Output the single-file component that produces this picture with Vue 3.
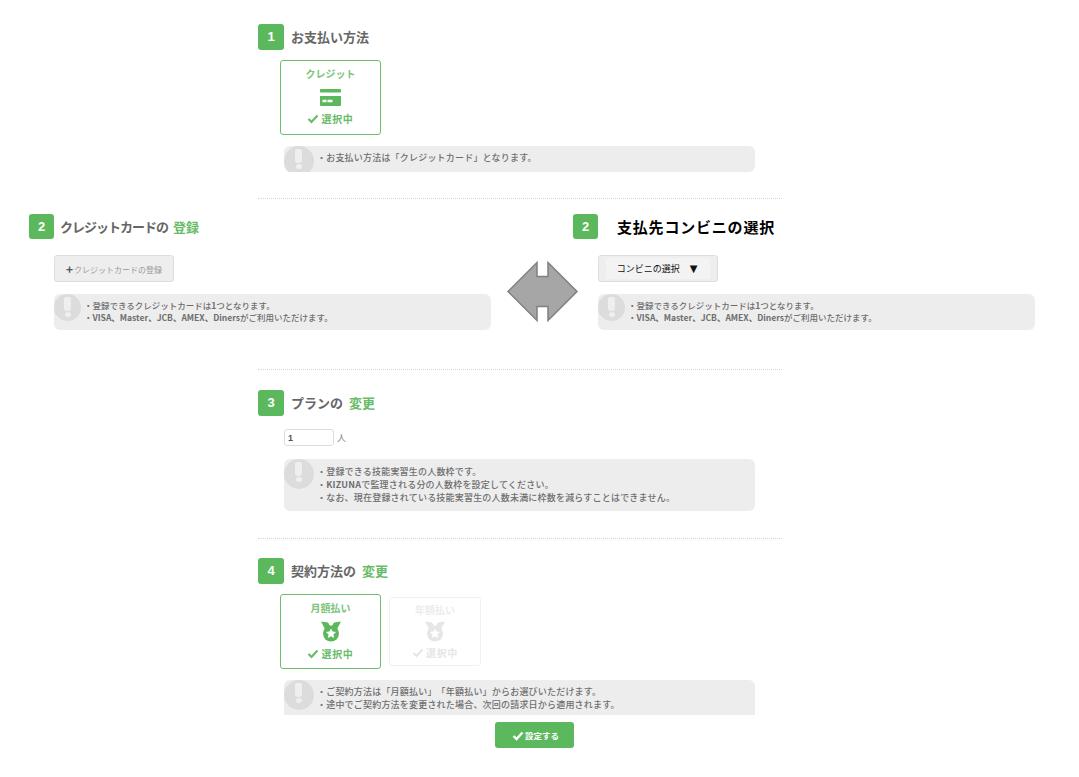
<script setup>
const checkPath = 'M1.5 6 L4.5 9 L10.5 2.5'
</script>

<template>
  <div class="page">
    <main class="content">
      <section class="sec sec-one">
        <h2 class="head"><span class="badge">1</span><span class="title">お支払い方法</span></h2>
        <div class="cards">
          <div class="card on">
            <div class="card-title">クレジット</div>
            <svg class="card-icon" width="21" height="17" viewBox="0 0 21 17" aria-hidden="true">
              <rect x="0" y="0" width="21" height="3.500" rx="0.800" fill="#5cb85c" />
              <path fill-rule="evenodd" d="M0 7h21v9a1 1 0 0 1-1 1h-19a1 1 0 0 1-1-1z M2.500 10.750v2.500h4v-2.500z M7.500 10.750v2.500h5v-2.500z" fill="#5cb85c" />
            </svg>
            <div class="state">
              <svg width="12" height="11" viewBox="0 0 12 11"><path :d="checkPath" fill="none" stroke="currentColor" stroke-width="2.200" /></svg>
              <span>選択中</span>
            </div>
          </div>
        </div>
        <div class="note note-a">
          <span class="mark"><i class="bar"></i><i class="dot"></i></span>
          <p>・お支払い方法は「クレジットカード」となります。</p>
        </div>
      </section>

      <section class="compare">
        <div class="side">
          <h2 class="head small"><span class="badge">2</span><span class="title tight">クレジットカードの</span><em>登録</em></h2>
          <button class="btn" type="button"><b>+</b>クレジットカードの登録</button>
          <div class="note note-b">
            <span class="mark"><i class="bar"></i><i class="dot"></i></span>
            <p>・登録できるクレジットカードは<b>1</b>つとなります。<br />・<b>VISA、Master、JCB、AMEX、Diners</b>がご利用いただけます。</p>
          </div>
        </div>
        <svg class="arrow" width="73" height="63" viewBox="0 0 73 63" aria-hidden="true">
          <path d="M2 31.500 L31 2.500 V16.500 H42 V2.500 L71 31.500 L42 60.500 V46.500 H31 V60.500 Z" fill="#a6a6a6" stroke="#7f7f7f" stroke-width="1.500" />
        </svg>
        <div class="side">
          <h2 class="head small"><span class="badge">2</span><span class="title dark">支払先コンビニの選択</span></h2>
          <button class="btn select" type="button"><span>コンビニの選択<i>▼</i></span></button>
          <div class="note note-b">
            <span class="mark"><i class="bar"></i><i class="dot"></i></span>
            <p>・登録できるクレジットカードは<b>1</b>つとなります。<br />・<b>VISA、Master、JCB、AMEX、Diners</b>がご利用いただけます。</p>
          </div>
        </div>
      </section>

      <section class="sec sec-three">
        <h2 class="head"><span class="badge">3</span><span class="title">プランの</span><em>変更</em></h2>
        <div class="qty"><input value="1" aria-label="人数" /><span>人</span></div>
        <div class="note note-c">
          <span class="mark"><i class="bar"></i><i class="dot"></i></span>
          <p>・登録できる技能実習生の人数枠です。<br />・<b>KIZUNA</b>で監理される分の人数枠を設定してください。<br />・なお、現在登録されている技能実習生の人数未満に枠数を減らすことはできません。</p>
        </div>
      </section>

      <section class="sec sec-four">
        <h2 class="head"><span class="badge">4</span><span class="title">契約方法の</span><em>変更</em></h2>
        <div class="cards">
          <div class="card on">
            <div class="card-title">月額払い</div>
            <svg class="medal" width="22" height="21" viewBox="0 0 22 21" aria-hidden="true">
              <path d="M1 0.500 L8 1.500 L11 6.500 L6 10 Z M21 0.500 L14 1.500 L11 6.500 L16 10 Z" fill="#5cb85c" />
              <circle cx="11" cy="12.500" r="8" fill="#5cb85c" />
              <path d="M11 7.400 l1.500 3.200 3.500.45-2.550 2.400.65 3.450-3.100-1.700-3.100 1.700.65-3.450-2.550-2.400 3.500-.45z" fill="#fff" />
            </svg>
            <div class="state">
              <svg width="12" height="11" viewBox="0 0 12 11"><path :d="checkPath" fill="none" stroke="currentColor" stroke-width="2.200" /></svg>
              <span>選択中</span>
            </div>
          </div>
          <div class="card off">
            <div class="card-title">年額払い</div>
            <svg class="medal" width="22" height="21" viewBox="0 0 22 21" aria-hidden="true">
              <path d="M1 0.500 L8 1.500 L11 6.500 L6 10 Z M21 0.500 L14 1.500 L11 6.500 L16 10 Z" fill="#e6e6e6" />
              <circle cx="11" cy="12.500" r="8" fill="#e6e6e6" />
              <path d="M11 7.400 l1.500 3.200 3.500.45-2.550 2.400.65 3.450-3.100-1.700-3.100 1.700.65-3.450-2.550-2.400 3.500-.45z" fill="#fff" />
            </svg>
            <div class="state">
              <svg width="12" height="11" viewBox="0 0 12 11"><path :d="checkPath" fill="none" stroke="currentColor" stroke-width="2.200" /></svg>
              <span>選択中</span>
            </div>
          </div>
        </div>
        <div class="note note-d">
          <span class="mark"><i class="bar"></i><i class="dot"></i></span>
          <p>・ご契約方法は「月額払い」「年額払い」からお選びいただけます。<br />・途中でご契約方法を変更された場合、次回の請求日から適用されます。</p>
        </div>
      </section>
    </main>

    <footer class="foot">
      <button class="submit" type="button">
        <svg width="12" height="11" viewBox="0 0 12 11"><path :d="checkPath" fill="none" stroke="#fff" stroke-width="2.400" /></svg>
        <span>設定する</span>
      </button>
    </footer>
  </div>
</template>

<style>
html, body { margin: 0; background: #fff; }
</style>

<style scoped>
.page {
  width: 1079px;
  height: 777px;
  overflow: hidden;
  background: #fff;
  font-family: "Noto Sans CJK JP", "Noto Sans", sans-serif;
  color: #666;
  text-spacing-trim: space-all;
}
.content {
  height: 715px;
  overflow: hidden;
}
.sec {
  width: 524px;
  margin-left: 258px;
  box-sizing: border-box;
}
.sec-one {
  padding-top: 24px;
  height: 199px;
  border-bottom: 1px dotted #d5d5d5;
}
.sec-three {
  padding-top: 20px;
  height: 169px;
  border-bottom: 1px dotted #d5d5d5;
}
.sec-four { padding-top: 19px; }

.head {
  display: flex;
  align-items: center;
  height: 26px;
  margin: 0;
  font-size: 13px;
  font-weight: 700;
  line-height: 26px;
}
.head em {
  margin-left: 6px;
  font-style: normal;
  color: #68bb68;
}
.small em { margin-left: 5px; }
.badge {
  flex: none;
  width: 26px;
  height: 26px;
  margin-right: 7px;
  border-radius: 3px;
  background: #5cb85c;
  color: #fff;
  font-size: 13px;
  font-family: "Liberation Sans", sans-serif;
  text-align: center;
}
.title { color: #666; }
.tight { letter-spacing: -1px; }
.dark {
  margin-left: 13px;
  color: #000;
  font-size: 15px;
  letter-spacing: 0.8px;
}
.small .badge { width: 25px; height: 25px; line-height: 25px; margin-right: 6px; }
.small { height: 25px; }

.cards {
  display: flex;
  align-items: center;
  gap: 8px;
  margin: 10px 0 11px 22px;
}
.card {
  display: flex;
  flex-direction: column;
  align-items: center;
  box-sizing: border-box;
  width: 101px;
  height: 75px;
  border: 1px solid #6cbf6c;
  border-radius: 3px;
  padding-top: 6px;
  color: #7cc47c;
  font-size: 10px;
  font-weight: 700;
}
.card-title { height: 14px; line-height: 14px; }
.card-icon { margin-top: 8px; }
.medal { margin-top: 6px; }
.state {
  display: flex;
  align-items: center;
  gap: 2px;
  margin-top: 4px;
  height: 15px;
  line-height: 15px;
  color: #68bb68;
  letter-spacing: 0.7px;
}
.card-icon + .state { margin-top: 5px; }
.off {
  width: 92px;
  height: 69px;
  border-color: #f1f1f1;
  padding-top: 5px;
  color: #ececec;
}
.off .state { color: #e6e6e6; margin-top: 3px; }
.off .medal { margin-top: 4px; }

.note {
  position: relative;
  box-sizing: border-box;
  overflow: hidden;
  width: 471px;
  margin-left: 26px;
  border-radius: 6px;
  background: #ededed;
  font-size: 9px;
  font-weight: 500;
  letter-spacing: 0.2px;
  color: #6e6e6e;
}
.note p {
  margin: 0;
  padding-left: 33px;
  line-height: 13px;
}
.note b { font-weight: 700; }
.note-a { height: 26px; }
.note-a p { padding-top: 5px; }
.note-c { height: 52px; }
.note-c p { padding-top: 6px; }
.note-d { height: 52px; }
.note-d p { padding-top: 5px; }
.note-b {
  width: 437px;
  height: 36px;
  margin-left: 25px;
  margin-top: 12px;
  font-size: 8.500px;
  letter-spacing: 0;
}
.note-b p { padding: 5px 0 0 30px; line-height: 12px; }
.mark {
  position: absolute;
  top: 0;
  left: 0;
  width: 30px;
  height: 30px;
  border-radius: 50%;
  background: #dcdcdc;
}
.note-b .mark { width: 27px; height: 27px; }
.bar {
  position: absolute;
  top: 3px;
  left: 11px;
  width: 7px;
  height: 14px;
  border-radius: 2px 2px 3px 3px;
  background: #efefef;
}
.dot {
  position: absolute;
  top: 18px;
  left: 12px;
  width: 6px;
  height: 5px;
  border-radius: 50%;
  background: #efefef;
}
.note-b .bar { left: 10px; }
.note-b .dot { left: 10.500px; }

.compare {
  position: relative;
  display: flex;
  gap: 82px;
  box-sizing: border-box;
  height: 171px;
  padding: 15px 0 0 29px;
}
.compare::after {
  content: "";
  position: absolute;
  left: 258px;
  bottom: 0;
  width: 524px;
  border-bottom: 1px dotted #d5d5d5;
}
.side { width: 462px; }
.arrow {
  position: absolute;
  left: 506px;
  top: 61px;
}
.btn {
  display: block;
  box-sizing: border-box;
  width: 120px;
  height: 27px;
  margin: 16px 0 0 25px;
  padding: 0;
  border: 1px solid #ddd;
  border-radius: 3px;
  background: #eee;
  font-family: inherit;
  font-size: 8px;
  color: #999;
  text-align: center;
}
.btn b {
  margin-right: 1px;
  color: #555;
  font-size: 12px;
  line-height: 1;
  vertical-align: -1px;
}
.select { padding: 2px 7px; }
.select span {
  display: block;
  height: 21px;
  padding-right: 2px;
  line-height: 21px;
  background: #f3f3f3;
  color: #111;
  font-size: 9px;
}
.select i {
  margin-left: 10px;
  font-family: "DejaVu Sans", sans-serif;
  font-style: normal;
  font-size: 10px;
}

.qty {
  display: flex;
  align-items: center;
  gap: 3px;
  margin: 13px 0 13px 26px;
  font-size: 9px;
  color: #888;
}
.qty input {
  box-sizing: border-box;
  width: 50px;
  height: 17px;
  padding: 0 3px;
  border: 1px solid #ddd;
  border-radius: 3px;
  font-family: "Liberation Sans", sans-serif;
  font-size: 9px;
  font-weight: 700;
  color: #555;
  outline: none;
}

.foot {
  display: flex;
  justify-content: center;
  padding: 7px 10px 0 0;
}
.submit {
  display: flex;
  align-items: center;
  justify-content: center;
  gap: 1px;
  width: 79px;
  height: 26px;
  padding: 0 0 0 2px;
  border: 0;
  border-radius: 3px;
  background: #5cb85c;
  color: #fff;
  font-family: inherit;
  font-size: 8.500px;
  font-weight: 700;
}
</style>
